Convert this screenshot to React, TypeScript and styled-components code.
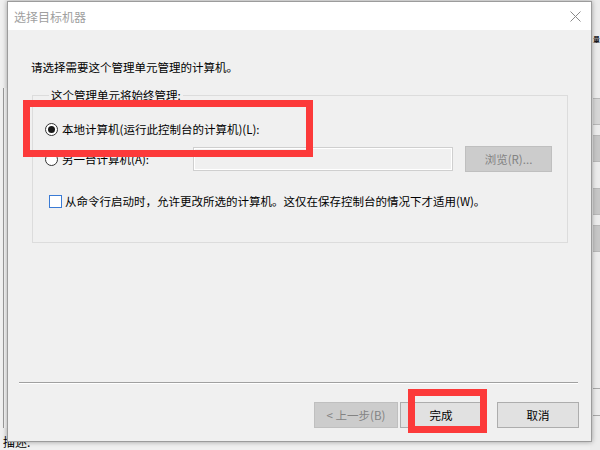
import React from 'react';
import styled, { createGlobalStyle } from 'styled-components';

const GlobalStyle = createGlobalStyle`
  html, body {
    margin: 0;
    padding: 0;
  }
  body {
    font-family: "Noto Sans CJK SC", "Noto Sans", sans-serif;
    font-size: 11.5px;
    color: #000;
    background: #f0f0f0;
  }
`;

const Desktop = styled.div`
  position: relative;
  width: 600px;
  height: 450px;
  overflow: hidden;
  background: #f0f0f0;
`;

/* the MMC window that sits behind the dialog */
const BackWindow = styled.div`
  position: absolute;
  left: 0;
  top: 0;
  width: 690px;
  height: 450px;
  display: flex;
  background: #f0f0f0;
`;

const LeftPane = styled.div`
  width: 590px;
  display: flex;
  flex-direction: column;
  padding-left: 3px;
  box-sizing: border-box;
`;

const ListPane = styled.div`
  margin-top: 88px;
  height: 340px;
  border-left: 1px solid #9a9a9a;
  background: #f7f7f7;
`;

const Caption = styled.div`
  margin-top: 6px;
  line-height: 16px;
  font-size: 12px;
`;

const RightPane = styled.div`
  flex: 1;
  display: flex;
  flex-direction: column;
  padding-top: 33px;
  padding-left: 3px;
  background: #ececec;
`;

const Heading = styled.div`
  line-height: 12px;
  font-size: 7px;
  font-weight: bold;
  color: #1a1a1a;
`;

const SideButton = styled.div<{ $gap: number; $shade?: boolean }>`
  margin-top: ${p => p.$gap}px;
  height: 27px;
  border-top: 1px solid #b8b8b8;
  border-bottom: 1px solid #b8b8b8;
  background: ${p => (p.$shade ? '#c6c6c6' : '#d6d6d6')};
  box-sizing: border-box;
`;

const SideRule = styled.div<{ $gap: number }>`
  margin-top: ${p => p.$gap}px;
  height: 1px;
  background: #a8a8a8;
`;

const Dialog = styled.div`
  position: absolute;
  left: 7px;
  top: 1px;
  width: 585px;
  height: 441px;
  box-sizing: border-box;
  border: 1px solid #9c9c9c;
  background: #f0f0f0;
  box-shadow: 0 0 5px rgba(0, 0, 0, 0.35);
  display: flex;
  flex-direction: column;
`;

const TitleBar = styled.div`
  height: 28px;
  flex-shrink: 0;
  background: #fff;
  display: flex;
  align-items: center;
  justify-content: space-between;
  padding: 0 10px 0 6px;
`;

const Title = styled.span`
  font-size: 12px;
  color: #a0a0a0;
`;

const Body = styled.div`
  flex: 1;
  display: flex;
  flex-direction: column;
  padding: 29px 23px 0 24px;
`;

const Intro = styled.div`
  line-height: 16px;
  margin-left: -1px;
`;

const GroupBox = styled.fieldset`
  margin: 12px 0 0;
  padding: 13px 12px 0 12px;
  height: 156px;
  box-sizing: border-box;
  border: 1px solid #dcdcdc;
  min-width: 0;
`;

const Legend = styled.legend`
  padding: 0 2px;
  margin-left: 4px;
  line-height: 16px;
`;

const OptionRow = styled.div<{ $gap?: number }>`
  display: flex;
  align-items: center;
  height: 26px;
  margin-top: ${p => p.$gap ?? 0}px;
`;

const Radio = styled.span<{ $checked?: boolean }>`
  width: 13px;
  height: 13px;
  box-sizing: border-box;
  border: 1px solid #333;
  border-radius: 50%;
  background: #fff;
  display: flex;
  align-items: center;
  justify-content: center;
  margin-right: 4px;
  flex-shrink: 0;

  &::after {
    content: '';
    width: 7px;
    height: 7px;
    border-radius: 50%;
    background: ${p => (p.$checked ? '#1a1a1a' : 'transparent')};
  }
`;

const Check = styled.span`
  width: 13px;
  height: 13px;
  box-sizing: border-box;
  border: 1px solid #3a7bd5;
  background: #fff;
  margin: 0 3px 0 4px;
  flex-shrink: 0;
`;

const OptionLabel = styled.span`
  line-height: 16px;
  white-space: nowrap;
`;

const NameField = styled.div`
  width: 260px;
  height: 24px;
  box-sizing: border-box;
  margin-left: auto;
  border: 1px solid #cfcfcf;
  box-shadow: inset -1px -1px 0 #fff, inset 1px 1px 0 #fff;
  background: #f0f0f0;
`;

const Button = styled.div<{ $disabled?: boolean; $width?: number }>`
  width: ${p => p.$width ?? 82}px;
  height: 26px;
  box-sizing: border-box;
  display: flex;
  align-items: center;
  justify-content: center;
  border: 1px solid ${p => (p.$disabled ? '#bfbfbf' : '#adadad')};
  background: ${p => (p.$disabled ? '#cccccc' : '#e1e1e1')};
  color: ${p => (p.$disabled ? '#838383' : '#000')};
  line-height: 16px;
  white-space: nowrap;
`;

const BrowseButton = styled(Button)`
  margin-left: 12px;
  margin-right: 3px;
`;

const Footer = styled.div`
  margin-top: auto;
  padding: 0 12px 13px 11px;
  display: flex;
  flex-direction: column;
`;

const Separator = styled.div`
  height: 1px;
  background: #a0a0a0;
  border-bottom: 1px solid #fff;
  margin-right: 1px;
`;

const ButtonRow = styled.div`
  display: flex;
  justify-content: flex-end;
  margin-top: 18px;
`;

const Spacer = styled.div<{ $w: number }>`
  width: ${p => p.$w}px;
`;

const Mark = styled.div<{ $x: number; $y: number; $w: number; $h: number }>`
  position: absolute;
  left: ${p => p.$x}px;
  top: ${p => p.$y}px;
  width: ${p => p.$w}px;
  height: ${p => p.$h}px;
  box-sizing: border-box;
  border: 7px solid #fc3a3a;
`;

const CloseIcon = () => (
  <svg width="11" height="11" viewBox="0 0 11 11">
    <path d="M0.5 0.5 L10.5 10.5 M10.5 0.5 L0.5 10.5" stroke="#8a8a8a" strokeWidth="1" fill="none" />
  </svg>
);

export default function App() {
  return (
    <Desktop>
      <GlobalStyle />
      <BackWindow>
        <LeftPane>
          <ListPane />
          <Caption>描述:</Caption>
        </LeftPane>
        <RightPane>
          <Heading>量</Heading>
          <SideButton $gap={53} />
          <SideButton $gap={10} $shade />
          <SideButton $gap={26} $shade />
          <SideButton $gap={10} $shade />
          <SideRule $gap={136} />
          <SideRule $gap={26} />
        </RightPane>
      </BackWindow>

      <Dialog>
        <TitleBar>
          <Title>选择目标机器</Title>
          <CloseIcon />
        </TitleBar>
        <Body>
          <Intro>请选择需要这个管理单元管理的计算机。</Intro>
          <GroupBox>
            <Legend>这个管理单元将始终管理:</Legend>
            <OptionRow>
              <Radio $checked />
              <OptionLabel>本地计算机(运行此控制台的计算机)(L):</OptionLabel>
            </OptionRow>
            <OptionRow $gap={4}>
              <Radio />
              <OptionLabel>另一台计算机(A):</OptionLabel>
              <NameField />
              <BrowseButton $disabled $width={87}>浏览(R)...</BrowseButton>
            </OptionRow>
            <OptionRow $gap={16}>
              <Check />
              <OptionLabel>从命令行启动时，允许更改所选的计算机。这仅在保存控制台的情况下才适用(W)。</OptionLabel>
            </OptionRow>
          </GroupBox>
        </Body>
        <Footer>
          <Separator />
          <ButtonRow>
            <Button $disabled $width={84}>&lt; 上一步(B)</Button>
            <Spacer $w={2} />
            <Button>完成</Button>
            <Spacer $w={15} />
            <Button>取消</Button>
          </ButtonRow>
        </Footer>
      </Dialog>

      <Mark $x={23} $y={100} $w={290} $h={57} />
      <Mark $x={408} $y={389} $w={79} $h={44} />
    </Desktop>
  );
}
